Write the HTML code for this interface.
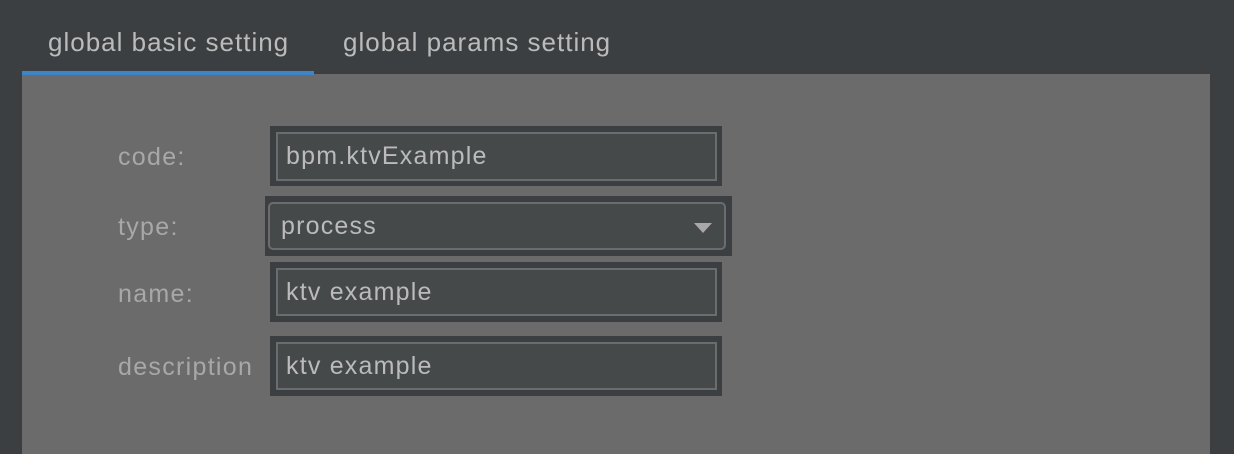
<!DOCTYPE html>
<html><head><style>
body{margin:0;width:1234px;height:454px;background:#3c3f41;position:relative;overflow:hidden;font-family:"Liberation Sans",sans-serif;}
.t{position:absolute;top:27px;font-size:26px;letter-spacing:1px;color:#bbbbbb;}
.ul{position:absolute;left:22px;top:71px;width:292px;height:4px;background:#3d85c6;}
.panel{position:absolute;left:22px;top:74px;width:1188px;height:380px;background:#6b6b6b;}
.lab{position:absolute;left:118px;font-size:25px;letter-spacing:1.3px;color:#a8a8a8;}
.o{position:absolute;background:#3c3f41;}
.i{position:absolute;background:#45494a;border:2px solid #6a6c6d;box-sizing:border-box;font-size:25px;letter-spacing:1.2px;color:#bbbbbb;padding-left:8px;display:flex;align-items:center;}
</style></head><body>
<div class="t" style="left:48px">global basic setting</div>
<div class="t" style="left:343px">global params setting</div>
<div class="panel"></div>
<div class="ul"></div>
<div class="lab" style="top:143px">code:</div>
<div class="lab" style="top:213px">type:</div>
<div class="lab" style="top:280px">name:</div>
<div class="lab" style="top:353px">description</div>

<div class="o" style="left:270px;top:126px;width:452px;height:60px"></div>
<div class="i" style="left:276px;top:132px;width:441px;height:49px">bpm.ktvExample</div>

<div class="o" style="left:265px;top:196px;width:467px;height:60px"></div>
<div class="i" style="left:268px;top:202px;width:458px;height:48px;border-radius:5px;padding-left:11px">process
<svg style="position:absolute;right:12px;top:19px" width="18" height="10"><path d="M0 0H18L9 10Z" fill="#a8a8a8"/></svg></div>

<div class="o" style="left:270px;top:262px;width:452px;height:60px"></div>
<div class="i" style="left:276px;top:268px;width:441px;height:48px">ktv example</div>

<div class="o" style="left:270px;top:336px;width:452px;height:60px"></div>
<div class="i" style="left:276px;top:342px;width:441px;height:48px">ktv example</div>
</body></html>
